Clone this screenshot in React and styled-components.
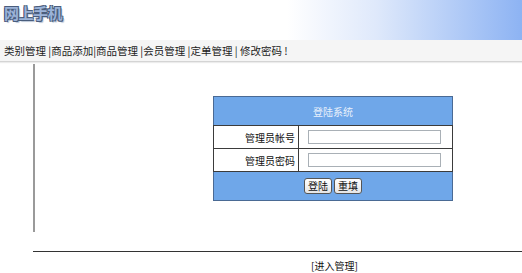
import React from "react";
import styled, { createGlobalStyle } from "styled-components";

const GlobalStyle = createGlobalStyle`
  body {
    margin: 0;
    background: #fff;
    font-family: "Noto Sans CJK SC", "Liberation Sans", sans-serif;
    font-size: 10px;
    color: #222;
  }
`;

function App() {
  return (
    <>
      <GlobalStyle />
      <Header>
        <Logo>网上手机</Logo>
      </Header>
      <Nav>类别管理 |商品添加|商品管理 |会员管理 |定单管理 | 修改密码 !</Nav>
      <Main>
        <Side />
        <Content>
          <LoginTable>
            <tbody>
              <BlueRow>
                <TitleCell colSpan={2}>登陆系统</TitleCell>
              </BlueRow>
              <FieldRow>
                <LabelCell>管理员帐号</LabelCell>
                <InputCell>
                  <TextInput type="text" />
                </InputCell>
              </FieldRow>
              <FieldRow>
                <LabelCell>管理员密码</LabelCell>
                <InputCell>
                  <TextInput type="password" />
                </InputCell>
              </FieldRow>
              <BlueRow>
                <ButtonCell colSpan={2}>
                  <Button>登陆</Button>
                  <Button>重填</Button>
                </ButtonCell>
              </BlueRow>
            </tbody>
          </LoginTable>
        </Content>
      </Main>
      <Footer>
        <FooterLink>[进入管理]</FooterLink>
      </Footer>
    </>
  );
}

const Header = styled.div`
  height: 40px;
  background: linear-gradient(to right, #fff 0%, #fff 55%, #dfe9fb 72%, #8db3f3 100%);
  display: flex;
  align-items: flex-start;
  padding: 5px 0 0 4px;
  box-sizing: border-box;
`;

const Logo = styled.div`
  font-size: 15px;
  font-weight: bold;
  line-height: 16px;
  color: #9bb3d8;
  letter-spacing: -0.5px;
  text-shadow: -1px -1px 0 #4a5d7c, 1px -1px 0 #4a5d7c, -1px 1px 0 #4a5d7c,
    1px 1px 0 #4a5d7c, 2px 2px 1px #b8c4d6;
`;

const Nav = styled.div`
  height: 21px;
  line-height: 22px;
  background: #f5f5f5;
  border-bottom: 1px solid #d4d4d4;
  box-shadow: 0 1px 1px #ececec;
  padding-left: 4px;
  font-size: 10.5px;
  color: #222;
  white-space: pre;
`;

const Main = styled.div`
  display: flex;
  margin-top: 2px;
`;

const Side = styled.div`
  width: 33px;
  height: 168px;
  border-right: 2px solid #9a9a9a;
  flex-shrink: 0;
`;

const Content = styled.div`
  padding: 32px 0 0 178px;
`;

const LoginTable = styled.table`
  width: 240px;
  border-collapse: collapse;
  border: 1px solid #4a6a94;
`;

const BlueRow = styled.tr`
  background: #6fa7e9;
`;

const FieldRow = styled.tr`
  background: #fff;
  height: 23px;
`;

const TitleCell = styled.td`
  height: 28px;
  text-align: center;
  color: #e8f0fb;
  font-size: 10px;
  border-bottom: 1px solid #3b3b3b;
  padding: 0;
`;

const LabelCell = styled.td`
  width: 81px;
  text-align: right;
  padding: 0 3px 0 0;
  border: 1px solid #3b3b3b;
  font-size: 10px;
  color: #111;
`;

const InputCell = styled.td`
  padding: 0 0 0 9px;
  border: 1px solid #3b3b3b;
`;

const TextInput = styled.input`
  width: 133px;
  height: 14px;
  box-sizing: border-box;
  border: 1px solid #a9b0b6;
  padding: 0;
  display: block;
  outline: none;
`;

const ButtonCell = styled.td`
  height: 28px;
  text-align: center;
  padding: 0;
  border-top: 1px solid #3b3b3b;
`;

const Button = styled.button`
  font-family: "Noto Sans CJK SC", sans-serif;
  font-size: 10px;
  height: 16px;
  padding: 0 3px;
  margin: 0 1px;
  line-height: 14px;
  border: 1px solid #555;
  border-radius: 3px;
  background: linear-gradient(#ffffff, #e6e6e6);
  color: #111;
`;

const Footer = styled.div`
  margin: 19px 0 0 33px;
  border-top: 1px solid #333;
  padding: 6px 0 0 278px;
`;

const FooterLink = styled.span`
  font-size: 10px;
  color: #111;
`;

export default App;
